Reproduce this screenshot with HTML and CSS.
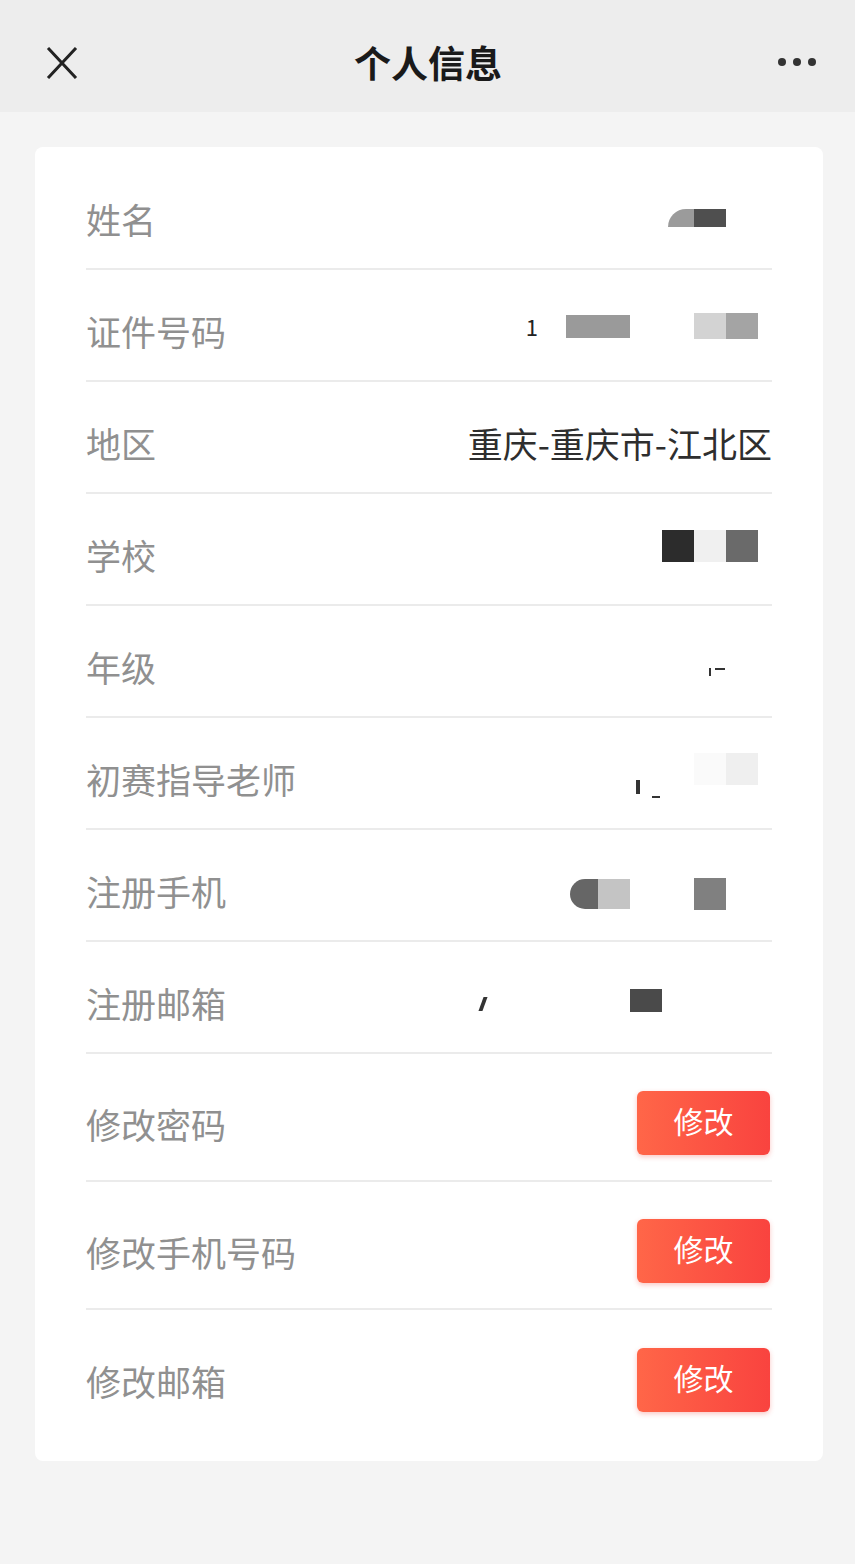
FILE: index.html
```html
<!DOCTYPE html>
<html lang="zh-CN">
    <head>
        <meta charset="UTF-8">
        <meta name="viewport" content="width=device-width, initial-scale=1.0">
        <title>个人信息</title>
        <link rel="stylesheet" href="styles.css">
    </head>
<body>
    <div class="topbar">
        <svg class="close" width="32" height="32" viewBox="0 0 32 32">
            <path d="M2 1 L30 31 M30 1 L2 31" stroke="#222" stroke-width="3" fill="none"/>
        </svg>
        <h1>个人信息</h1>
        <div class="more"><span></span><span></span><span></span></div>
    </div>

    <div class="card">
        <div class="row">
            <span class="label">姓名</span>
            <span class="value mask m-name">
                <i class="px w26 h18 c9b round-tl"></i><i class="px w32 h18 c4f"></i>
            </span>
        </div>
        <div class="row">
            <span class="label">证件号码</span>
            <span class="value mask m-id">
                <b class="frag">1</b>
                <i class="px w64 h23 c9a gap-l"></i>
                <i class="px w32 h26 cd3 gap-xl"></i><i class="px w32 h26 ca4"></i>
            </span>
        </div>
        <div class="row">
            <span class="label">地区</span>
            <span class="value">重庆-重庆市-江北区</span>
        </div>
        <div class="row">
            <span class="label">学校</span>
            <span class="value mask m-school">
                <i class="px w32 h32 c2c"></i><i class="px w32 h32 cf0"></i><i class="px w32 h32 c6a"></i>
            </span>
        </div>
        <div class="row">
            <span class="label">年级</span>
            <span class="value mask m-grade">
                <i class="px w2 h8 c33"></i><i class="px w10 h2 c33 gap-s up"></i>
            </span>
        </div>
        <div class="row">
            <span class="label">初赛指导老师</span>
            <span class="value mask m-teacher">
                <i class="px w4 h14 c33 down"></i><i class="px w8 h2 c33 gap-m down2"></i>
                <i class="px w32 h32 cfa gap-xxl"></i><i class="px w32 h32 cef"></i>
            </span>
        </div>
        <div class="row">
            <span class="label">注册手机</span>
            <span class="value mask m-phone">
                <i class="px w28 h30 c66 round-l"></i><i class="px w32 h30 cc4"></i>
                <i class="px w32 h32 c80 gap-xl"></i>
            </span>
        </div>
        <div class="row">
            <span class="label">注册邮箱</span>
            <span class="value mask m-mail">
                <i class="px w4 h14 c33 tilt"></i>
                <i class="px w32 h23 c4a gap-mail"></i>
            </span>
        </div>
        <div class="row tall">
            <span class="label">修改密码</span>
            <button class="btn">修改</button>
        </div>
        <div class="row tall">
            <span class="label">修改手机号码</span>
            <button class="btn">修改</button>
        </div>
        <div class="row tall last">
            <span class="label">修改邮箱</span>
            <button class="btn">修改</button>
        </div>
    </div>
</body>
</html>
```

FILE: styles.css
```css
body {
    margin: 0;
    padding: 0;
    background-color: #f4f4f4;
    font-family: "Noto Sans CJK SC", "Noto Sans", sans-serif;
    color: #333333;
}

/* barra superior */
.topbar {
    height: 112px;
    background-color: #ededed;
    display: flex;
    align-items: center;
    justify-content: space-between;
    padding: 12px 39px 0 46px;
    box-sizing: border-box;
}

.close {
    display: block;
    margin-top: 1px;
}

.topbar h1 {
    margin: 0;
    font-size: 37px;
    font-weight: 700;
    color: #1a1a1a;
}

.more {
    display: flex;
    gap: 7px;
    width: 38px;
}

.more span {
    width: 8px;
    height: 8px;
    border-radius: 50%;
    background-color: #333333;
}

/* tarjeta */
.card {
    margin: 35px 32px 0 35px;
    padding: 11px 51px 23px;
    background-color: #ffffff;
    border-radius: 8px;
}

.row {
    height: 112px;
    box-sizing: border-box;
    padding-top: 10px;
    display: flex;
    align-items: center;
    justify-content: space-between;
    border-bottom: 2px solid #ebebeb;
}

.row.tall {
    height: 128px;
    padding-top: 12px;
}

.row.last {
    border-bottom: none;
}

.label {
    font-size: 35px;
    color: #909090;
}

.value {
    font-size: 35px;
    color: #2e2e2e;
}

/* bloques de mosaico */
.mask {
    display: flex;
    align-items: center;
}

.px {
    display: block;
}

.frag {
    font-size: 22px;
    font-weight: 400;
    color: #222;
    line-height: 1;
}

.m-name { margin-right: 46px; margin-top: 0; }
.m-id { margin-right: 14px; margin-top: -8px; }
.m-school { margin-right: 14px; margin-top: -16px; }
.m-grade { margin-right: 47px; margin-top: 12px; }
.m-teacher { margin-right: 14px; margin-top: -18px; }
.m-phone { margin-right: 46px; margin-top: 8px; }
.m-mail { margin-right: 110px; margin-top: -4px; }

.w2 { width: 2px; }
.w4 { width: 4px; }
.w8 { width: 8px; }
.w10 { width: 10px; }
.w26 { width: 26px; }
.w28 { width: 28px; }
.w32 { width: 32px; }
.w64 { width: 64px; }

.h2 { height: 2px; }
.h8 { height: 8px; }
.h14 { height: 14px; }
.h18 { height: 18px; }
.h23 { height: 23px; }
.h26 { height: 26px; }
.h30 { height: 30px; }
.h32 { height: 32px; }

.c2c { background-color: #2c2c2c; }
.c33 { background-color: #333333; }
.c4a { background-color: #4a4a4a; }
.c4f { background-color: #4f4f4f; }
.c66 { background-color: #666666; }
.c6a { background-color: #6a6a6a; }
.c80 { background-color: #808080; }
.c9a { background-color: #9a9a9a; }
.c9b { background-color: #9b9b9b; }
.ca4 { background-color: #a4a4a4; }
.cc4 { background-color: #c4c4c4; }
.cd3 { background-color: #d3d3d3; }
.cef { background-color: #efefef; }
.cf0 { background-color: #f0f0f0; }
.cfa { background-color: #fafafa; }

.round-l { border-radius: 15px 0 0 15px; }
.round-tl { border-radius: 18px 0 0 0; }

.gap-s { margin-left: 4px; }
.gap-m { margin-left: 12px; }
.gap-l { margin-left: 28px; }
.gap-xl { margin-left: 64px; }
.gap-xxl { margin-left: 34px; }
.gap-mail { margin-left: 145px; }
.up { margin-top: -6px; }
.down { margin-top: 36px; }
.down2 { margin-top: 56px; }
.tilt { transform: skewX(-20deg); margin-top: 8px; }

/* botón modificar */
.btn {
    width: 133px;
    height: 64px;
    margin-right: 2px;
    border: none;
    border-radius: 6px;
    background: linear-gradient(90deg, #ff6648, #f9433f);
    box-shadow: 0 2px 5px rgba(240, 70, 60, 0.3);
    color: #ffffff;
    font-family: "Noto Sans CJK SC", sans-serif;
    font-size: 30px;
    padding: 0 0 6px;
    cursor: pointer;
}
```
